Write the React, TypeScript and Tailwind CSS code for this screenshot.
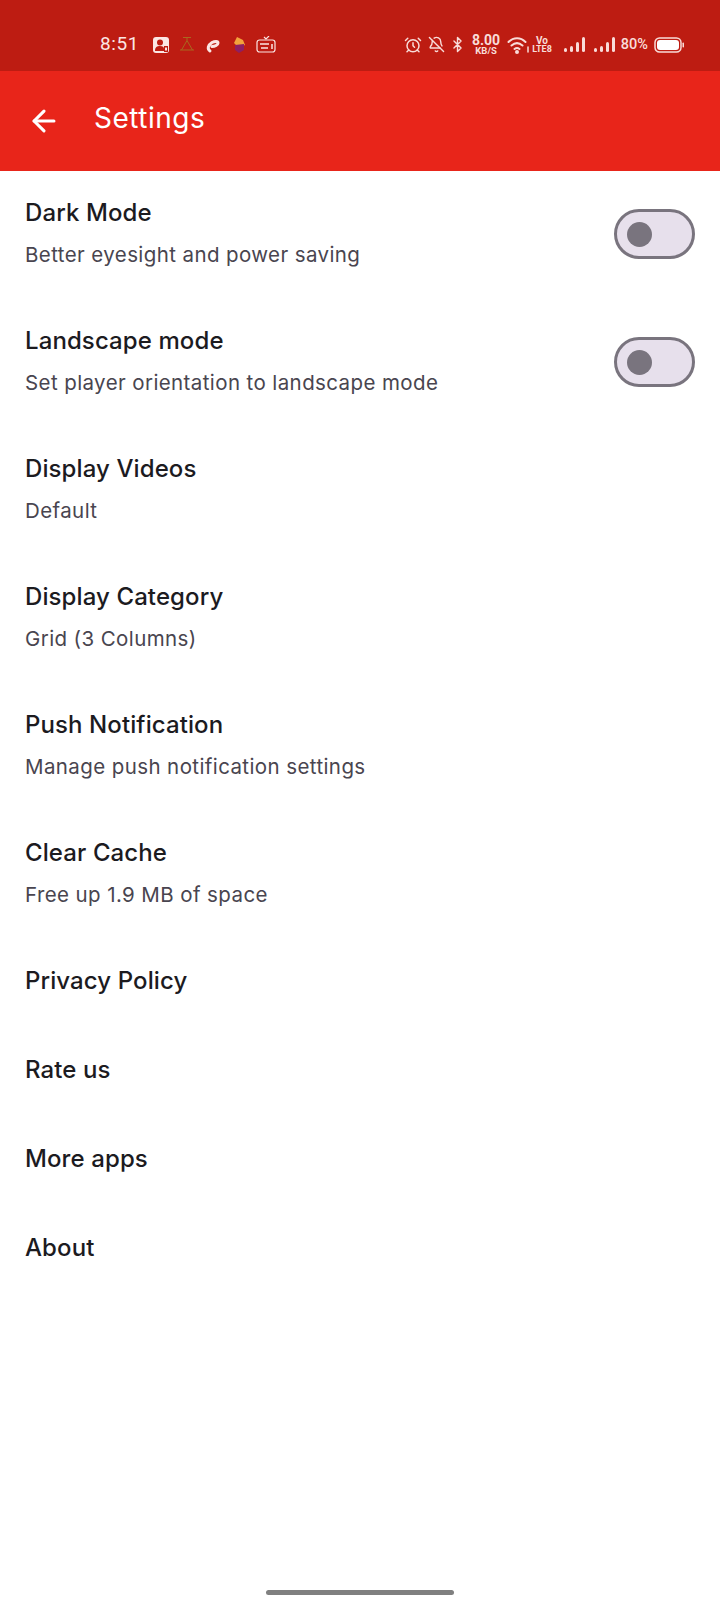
import { ArrowLeft, AlarmClock, BellOff, Bluetooth } from "lucide-react";

const rows = [
  { title: "Dark Mode", sub: "Better eyesight and power saving", toggle: true },
  { title: "Landscape mode", sub: "Set player orientation to landscape mode", toggle: true },
  { title: "Display Videos", sub: "Default" },
  { title: "Display Category", sub: "Grid (3 Columns)" },
  { title: "Push Notification", sub: "Manage push notification settings" },
  { title: "Clear Cache", sub: "Free up 1.9 MB of space" },
];

const links = ["Privacy Policy", "Rate us", "More apps", "About"];

const Toggle = () => (
  <div className="flex items-center w-[81px] h-[50px] rounded-full border-[3px] border-[#79747e] bg-[#e7e0ec] pl-[10px]">
    <div className="w-[25px] h-[25px] rounded-full bg-[#79747e]" />
  </div>
);

const Signal = () => (
  <svg width="24" height="18" viewBox="0 0 24 18" fill="#f9dcd9">
    <rect x="1" y="12" width="3" height="4" rx="1.5" />
    <rect x="7" y="10" width="3" height="6" rx="1.5" />
    <rect x="13" y="6" width="3" height="10" rx="1.5" />
    <rect x="19" y="1" width="3" height="15" rx="1.5" />
  </svg>
);

const NotifyIcons = () => (
  <div className="flex items-center gap-[8px] ml-[13px]">
    <svg width="18" height="18" viewBox="0 0 18 18">
      <rect x="1" y="1" width="16" height="16" rx="3" fill="#fbe6e4" />
      <circle cx="8" cy="6.5" r="3" fill="#bd1c12" />
      <path d="M3 15c0-4 2-5 5-5s4 1 4 3v2z" fill="#bd1c12" />
      <rect x="12" y="10" width="4" height="6" fill="#bd1c12" />
      <rect x="13" y="11.5" width="2" height="3" fill="#fbe6e4" />
    </svg>
    <svg width="18" height="18" viewBox="0 0 18 18" fill="none" stroke="#a8691f" strokeWidth="1">
      <path d="M5 1.500h8M9 1.500v3M2 14h14M3.500 14l5.500-9.500 5.500 9.500" />
    </svg>
    <svg width="18" height="18" viewBox="0 0 18 18" fill="none" stroke="#fbe6e4" strokeWidth="3" strokeLinecap="round">
      <path d="M6 15c-3-2-2-6 2-8.500 3-1.500 6-1.500 6 .5 0 2-3 3.500-6 3.500" />
    </svg>
    <svg width="18" height="18" viewBox="0 0 18 18">
      <path d="M4 7l3-6 6 3 2 5-6 3z" fill="#f2a23c" />
      <path d="M5 9l9-1 0 6-5 3-4-3z" fill="#8e1f63" />
    </svg>
    <svg width="21" height="18" viewBox="0 0 21 18" fill="none" stroke="#fbe6e4" strokeWidth="1.200">
      <rect x="1" y="4" width="18" height="12" rx="2.500" />
      <path d="M8 1l2 2 3-3" />
      <path d="M4 8h9M5 12h7M16 8v5" strokeWidth="1.500" />
    </svg>
  </div>
);

const StatusRight = () => (
  <div className="flex items-center text-[#f9dcd9]">
    <AlarmClock size={18} strokeWidth={2} />
    <BellOff size={17} strokeWidth={2} className="ml-[6px]" />
    <Bluetooth size={17} strokeWidth={2} className="ml-[4px]" />
    <div className="flex flex-col items-center ml-[6px] font-bold leading-none">
      <span className="text-[14px] leading-[11px]">8.00</span>
      <span className="text-[9.5px] leading-[9px]">KB/S</span>
    </div>
    <svg width="24" height="18" viewBox="0 0 24 18" fill="none" stroke="#f9dcd9" strokeWidth="2" strokeLinecap="round" className="ml-[7px]">
      <path d="M1.500 6c5-5 12-5 17 0M4.500 9.500c3.500-3 7.500-3 11 0M7.500 13c2-1.500 3-1.500 5 0" />
      <circle cx="10" cy="16" r="1" fill="#f9dcd9" />
      <path d="M21 11v5" strokeWidth="1.500" />
    </svg>
    <div className="flex flex-col items-center ml-[1px] font-bold leading-none">
      <span className="text-[10px] leading-[9px]">Vo</span>
      <span className="text-[9px] leading-[9px]">LTE8</span>
    </div>
    <span className="ml-[11px] flex"><Signal /></span>
    <span className="ml-[6px] flex"><Signal /></span>
    <span className="ml-[4px] text-[14.500px] font-medium">80%</span>
    <svg width="32" height="16" viewBox="0 0 32 16" className="ml-[6px]">
      <rect x="1" y="1" width="26" height="14" rx="4.500" fill="none" stroke="#f9dcd9" strokeWidth="1.500" />
      <rect x="3" y="3" width="22" height="10" rx="3" fill="#ffffff" />
      <rect x="28.500" y="5.500" width="1.500" height="5" rx="0.700" fill="#f9dcd9" />
    </svg>
  </div>
);

export default function App() {
  return (
    <div className="relative w-[720px] h-[1600px] bg-white font-['Inter','Liberation_Sans',sans-serif] overflow-hidden">
      <div className="flex items-center justify-between h-[71px] bg-[#bd1c12] pt-[18px] pl-[100px] pr-[34px] font-['Roboto',sans-serif]">
        <div className="flex items-center">
          <span className="text-[19px] text-[#fbe6e4] tracking-[0.6px]">8:51</span>
          <NotifyIcons />
        </div>
        <StatusRight />
      </div>

      <div className="flex items-center h-[100px] bg-[#e8251a] pl-[27px]">
        <ArrowLeft size={34} strokeWidth={2.2} className="text-white" />
        <span className="ml-[33px] mb-[7px] text-[28px] tracking-[0.5px] text-white">Settings</span>
      </div>

      <div className="flex flex-col -mt-[1px]">
        {rows.map((row) => (
          <div key={row.title} className="flex items-center justify-between h-[128px] pl-[25px] pr-[25px]">
            <div className="flex flex-col gap-[15px] -mt-[1px]">
              <span className="text-[24px] leading-[28px] tracking-[0.1px] font-medium text-[#1c1b1f]">{row.title}</span>
              <span className="text-[20.500px] leading-[26px] tracking-[0.4px] text-[#49454f]">{row.sub}</span>
            </div>
            {row.toggle && <Toggle />}
          </div>
        ))}
        <div className="flex flex-col -mt-[2px]">
          {links.map((link) => (
            <div key={link} className="flex items-center h-[89px] pl-[25px]">
              <span className="text-[24px] leading-[28px] tracking-[0.1px] font-medium text-[#1c1b1f]">{link}</span>
            </div>
          ))}
        </div>
      </div>

      <div className="absolute bottom-[5px] left-[266px] w-[188px] h-[5px] rounded-full bg-[#808080]" />
    </div>
  );
}
